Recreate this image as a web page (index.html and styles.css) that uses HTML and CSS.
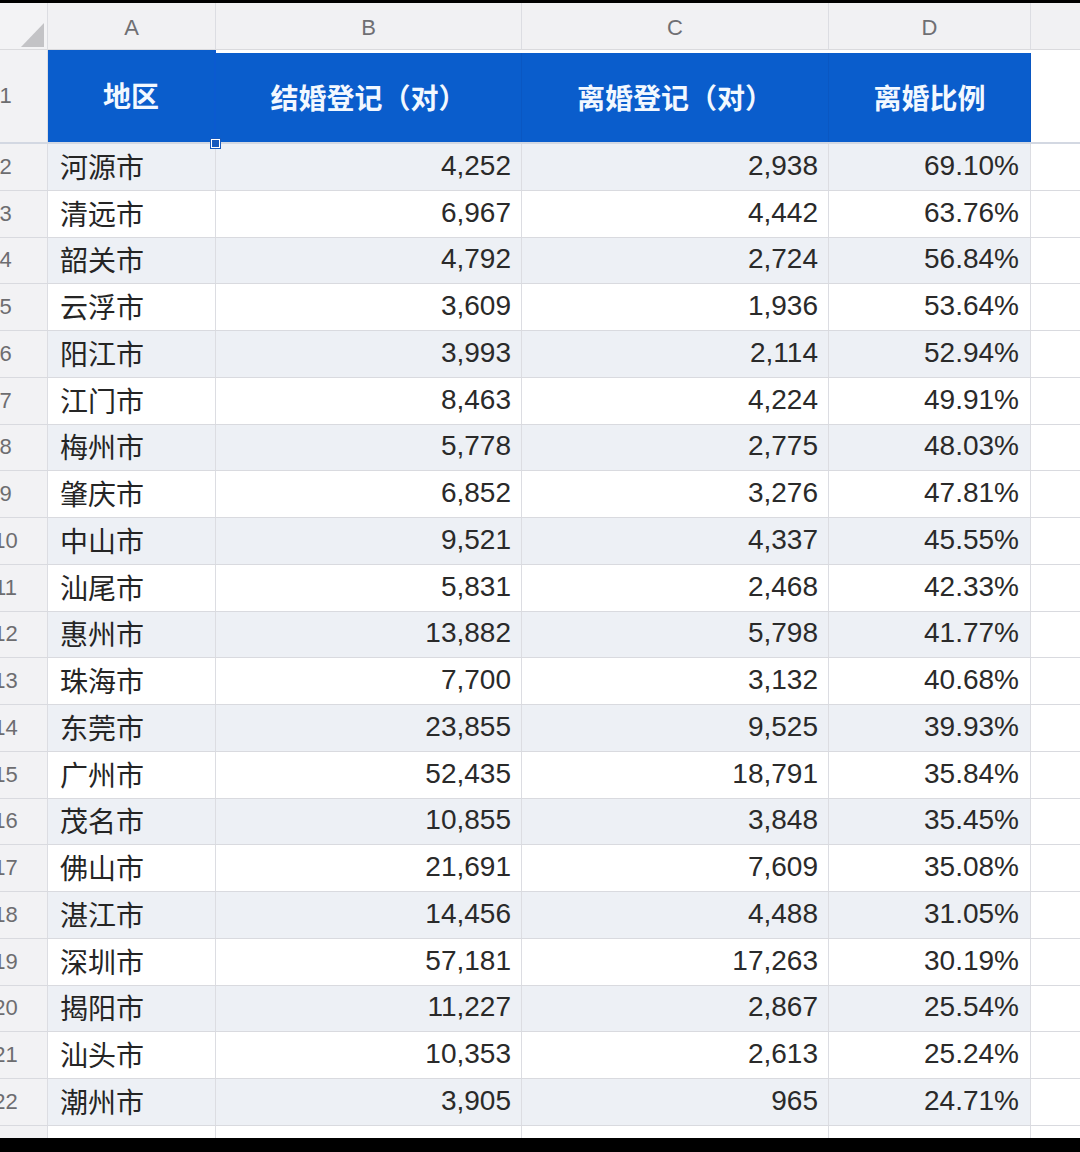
FILE: index.html
```html
<!DOCTYPE html>
<html lang="zh-CN">
<head>
<meta charset="utf-8">
<title>广东离婚比例</title>
<link rel="stylesheet" href="styles.css">
</head>
<body>
<div class="screen">
  <div class="sheet">
    <div class="row colhead">
      <div class="corner"><span class="tri"></span></div>
      <div class="letter">A</div>
      <div class="letter">B</div>
      <div class="letter">C</div>
      <div class="letter">D</div>
      <div class="letter"></div>
    </div>
    <div class="row head">
      <div class="rn"><span>1</span></div>
      <div class="hc sel">地区<span class="handle"></span></div>
      <div class="hc">结婚登记（对）</div>
      <div class="hc">离婚登记（对）</div>
      <div class="hc">离婚比例</div>
      <div class="blank"></div>
    </div>
    <div class="row alt"><div class="rn"><span>2</span></div><div class="name">河源市</div><div class="num">4,252</div><div class="num">2,938</div><div class="num">69.10%</div><div class="blank"></div></div>
    <div class="row"><div class="rn"><span>3</span></div><div class="name">清远市</div><div class="num">6,967</div><div class="num">4,442</div><div class="num">63.76%</div><div class="blank"></div></div>
    <div class="row alt"><div class="rn"><span>4</span></div><div class="name">韶关市</div><div class="num">4,792</div><div class="num">2,724</div><div class="num">56.84%</div><div class="blank"></div></div>
    <div class="row"><div class="rn"><span>5</span></div><div class="name">云浮市</div><div class="num">3,609</div><div class="num">1,936</div><div class="num">53.64%</div><div class="blank"></div></div>
    <div class="row alt"><div class="rn"><span>6</span></div><div class="name">阳江市</div><div class="num">3,993</div><div class="num">2,114</div><div class="num">52.94%</div><div class="blank"></div></div>
    <div class="row"><div class="rn"><span>7</span></div><div class="name">江门市</div><div class="num">8,463</div><div class="num">4,224</div><div class="num">49.91%</div><div class="blank"></div></div>
    <div class="row alt"><div class="rn"><span>8</span></div><div class="name">梅州市</div><div class="num">5,778</div><div class="num">2,775</div><div class="num">48.03%</div><div class="blank"></div></div>
    <div class="row"><div class="rn"><span>9</span></div><div class="name">肇庆市</div><div class="num">6,852</div><div class="num">3,276</div><div class="num">47.81%</div><div class="blank"></div></div>
    <div class="row alt"><div class="rn"><span>10</span></div><div class="name">中山市</div><div class="num">9,521</div><div class="num">4,337</div><div class="num">45.55%</div><div class="blank"></div></div>
    <div class="row"><div class="rn"><span>11</span></div><div class="name">汕尾市</div><div class="num">5,831</div><div class="num">2,468</div><div class="num">42.33%</div><div class="blank"></div></div>
    <div class="row alt"><div class="rn"><span>12</span></div><div class="name">惠州市</div><div class="num">13,882</div><div class="num">5,798</div><div class="num">41.77%</div><div class="blank"></div></div>
    <div class="row"><div class="rn"><span>13</span></div><div class="name">珠海市</div><div class="num">7,700</div><div class="num">3,132</div><div class="num">40.68%</div><div class="blank"></div></div>
    <div class="row alt"><div class="rn"><span>14</span></div><div class="name">东莞市</div><div class="num">23,855</div><div class="num">9,525</div><div class="num">39.93%</div><div class="blank"></div></div>
    <div class="row"><div class="rn"><span>15</span></div><div class="name">广州市</div><div class="num">52,435</div><div class="num">18,791</div><div class="num">35.84%</div><div class="blank"></div></div>
    <div class="row alt"><div class="rn"><span>16</span></div><div class="name">茂名市</div><div class="num">10,855</div><div class="num">3,848</div><div class="num">35.45%</div><div class="blank"></div></div>
    <div class="row"><div class="rn"><span>17</span></div><div class="name">佛山市</div><div class="num">21,691</div><div class="num">7,609</div><div class="num">35.08%</div><div class="blank"></div></div>
    <div class="row alt"><div class="rn"><span>18</span></div><div class="name">湛江市</div><div class="num">14,456</div><div class="num">4,488</div><div class="num">31.05%</div><div class="blank"></div></div>
    <div class="row"><div class="rn"><span>19</span></div><div class="name">深圳市</div><div class="num">57,181</div><div class="num">17,263</div><div class="num">30.19%</div><div class="blank"></div></div>
    <div class="row alt"><div class="rn"><span>20</span></div><div class="name">揭阳市</div><div class="num">11,227</div><div class="num">2,867</div><div class="num">25.54%</div><div class="blank"></div></div>
    <div class="row"><div class="rn"><span>21</span></div><div class="name">汕头市</div><div class="num">10,353</div><div class="num">2,613</div><div class="num">25.24%</div><div class="blank"></div></div>
    <div class="row alt"><div class="rn"><span>22</span></div><div class="name">潮州市</div><div class="num">3,905</div><div class="num">965</div><div class="num">24.71%</div><div class="blank"></div></div>
    <div class="row"><div class="rn"><span>23</span></div><div class="name"></div><div class="num"></div><div class="num"></div><div class="num"></div><div class="blank"></div></div>
  </div>
</div>
</body>
</html>
```

FILE: styles.css
```css
html, body {
  margin: 0;
  padding: 0;
  background: #000;
}

.screen {
  width: 1080px;
  height: 1152px;
  padding-top: 3px;
  box-sizing: border-box;
  background: #000;
  overflow: hidden;
}

.sheet {
  height: 1135px;
  overflow: hidden;
  background: #fff;
  font-family: "Liberation Sans", "Noto Sans CJK SC", sans-serif;
  color: #262626;
}

.row {
  display: grid;
  grid-template-columns: 48px 168px 306px 307px 202px 49px;
  height: 46.75px;
  box-sizing: border-box;
  border-bottom: 1px solid #d9dadf;
  background: #fff;
}

.row.alt {
  background: #edf0f5;
}

.row > div {
  border-right: 1px solid #dcdde2;
  box-sizing: border-box;
  min-width: 0;
}

.row > .blank {
  border-right: none;
  background: #fff;
}

/* column letters */
.colhead {
  height: 47px;
  background: #f1f1f3;
  border-bottom: 1px solid #dadadd;
}

.corner {
  position: relative;
  background: #f3f3f5;
}

.tri {
  position: absolute;
  left: 21px;
  top: 20px;
  width: 0;
  height: 0;
  border-style: solid;
  border-width: 0 0 24px 23px;
  border-color: transparent transparent #c3c3c6 transparent;
}

.letter {
  display: flex;
  align-items: center;
  justify-content: center;
  font-size: 22px;
  color: #6f6f73;
  padding-top: 3px;
}

.colhead > .letter:last-child {
  border-right: none;
}

/* row numbers */
.rn {
  overflow: hidden;
  display: flex;
  align-items: center;
  background: #f2f2f4;
  font-size: 22px;
  color: #6d6d70;
}

.rn span {
  display: block;
  flex: none;
  width: 40px;
  margin-left: -14.5px;
  text-align: center;
}

/* header row */
.head {
  height: 94px;
  background: #fff;
  border-bottom: 2px solid #d3d8e2;
}

.hc {
  position: relative;
  display: flex;
  align-items: center;
  justify-content: center;
  background: #0a5dcc;
  color: #f2f8ff;
  font-family: "Noto Sans CJK SC", sans-serif;
  font-weight: 700;
  font-size: 28px;
  margin-top: 3px;
  padding-bottom: 2px;
}

.row > .hc {
  border-right: 1px solid #0a57c2;
}

.hc.sel {
  margin-top: 0;
  border-right: 2px solid #0b5ad0;
}

.handle {
  position: absolute;
  right: -6px;
  bottom: -6px;
  width: 9px;
  height: 9px;
  box-sizing: border-box;
  background: #1659bd;
  border: 1.5px solid #ffffff;
  outline: 1px solid #1659bd;
  z-index: 2;
}

/* data cells */
.name {
  display: flex;
  align-items: center;
  padding-left: 12px;
  padding-bottom: 2px;
  font-family: "Noto Sans CJK SC", sans-serif;
  font-size: 28px;
  color: #252525;
}

.num {
  display: flex;
  align-items: center;
  justify-content: flex-end;
  padding-right: 10px;
  padding-bottom: 2px;
  font-size: 28px;
  color: #2a2a2a;
}

.row > .num:nth-child(5) {
  padding-right: 11px;
}
```
